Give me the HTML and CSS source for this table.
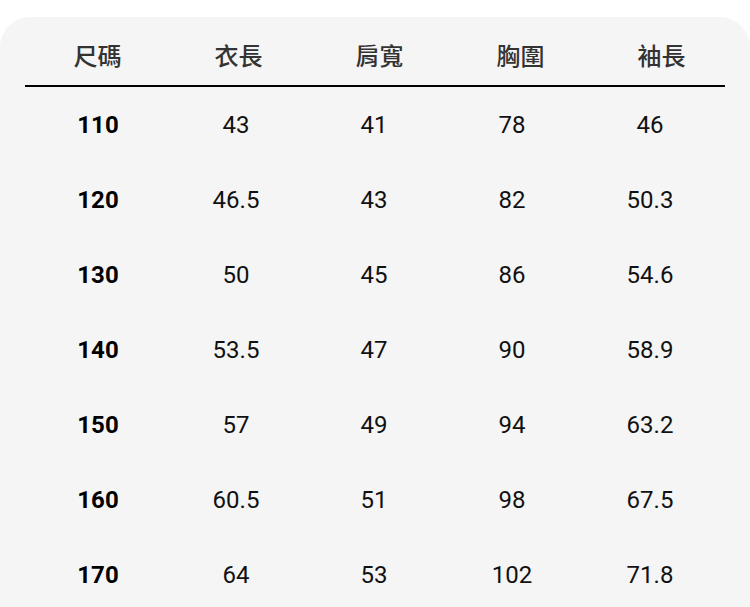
FILE: index.html
```html
<!DOCTYPE html>
<html lang="zh-Hant">
<head>
<meta charset="utf-8">
<link rel="stylesheet" href="styles.css">
</head>
<body>
<div class="card">
  <div class="head">
    <div>尺碼</div><div>衣長</div><div>肩寬</div><div>胸圍</div><div>袖長</div>
  </div>
  <div class="rule"></div>
  <div class="rows">
    <div class="row"><div class="size">110</div><div>43</div><div>41</div><div>78</div><div>46</div></div>
    <div class="row"><div class="size">120</div><div>46.5</div><div>43</div><div>82</div><div>50.3</div></div>
    <div class="row"><div class="size">130</div><div>50</div><div>45</div><div>86</div><div>54.6</div></div>
    <div class="row"><div class="size">140</div><div>53.5</div><div>47</div><div>90</div><div>58.9</div></div>
    <div class="row"><div class="size">150</div><div>57</div><div>49</div><div>94</div><div>63.2</div></div>
    <div class="row"><div class="size">160</div><div>60.5</div><div>51</div><div>98</div><div>67.5</div></div>
    <div class="row"><div class="size">170</div><div>64</div><div>53</div><div>102</div><div>71.8</div></div>
  </div>
</div>
</body>
</html>
```
FILE: styles.css
```css
html, body {
  margin: 0;
  padding: 0;
  background: #ffffff;
}
body {
  width: 750px;
  height: 607px;
  overflow: hidden;
  font-family: Roboto, "Noto Sans CJK TC", sans-serif;
}
.card {
  margin-top: 17px;
  height: 600px;
  background: #f5f5f5;
  border-radius: 30px 30px 0 0;
}
.head {
  display: grid;
  grid-template-columns: repeat(5, 141px);
  margin-left: 27px;
  padding-top: 6px;
  height: 62px;
  align-items: center;
  justify-items: center;
  font-family: "Noto Sans CJK TC", sans-serif;
  font-size: 24px;
  font-weight: 500;
  color: #333333;
}
.rule {
  margin: 0 25px;
  height: 2px;
  background: #000000;
}
.rows {
  display: flex;
  flex-direction: column;
}
.row {
  display: grid;
  grid-template-columns: repeat(5, 138px);
  margin-left: 29px;
  height: 75px;
  align-items: center;
  justify-items: center;
  font-size: 24px;
  color: #111111;
}
.size {
  font-weight: 700;
  color: #000000;
}
```
